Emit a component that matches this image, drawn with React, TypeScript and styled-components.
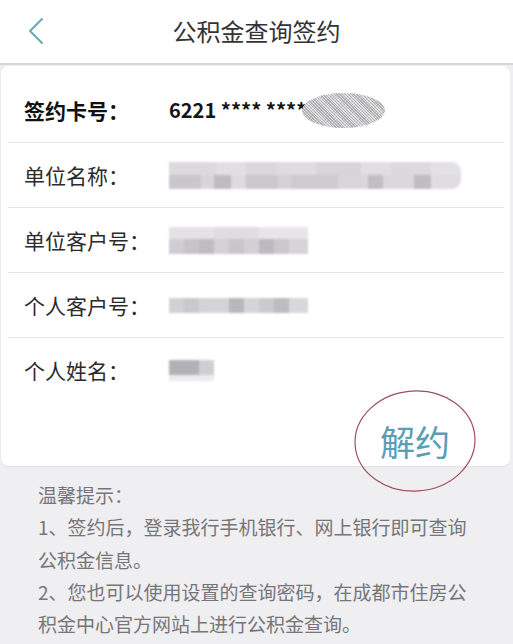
import React from "react";
import styled, { createGlobalStyle } from "styled-components";

const GlobalStyle = createGlobalStyle`
  html, body {
    margin: 0;
    padding: 0;
    background: #efeef1;
  }
  body {
    font-family: "Noto Sans CJK SC", "Noto Sans", sans-serif;
    -webkit-font-smoothing: antialiased;
  }
  * { box-sizing: border-box; }
`;

const Page = styled.div`
  width: 513px;
  min-height: 644px;
  background: #efeef1;
  display: flex;
  flex-direction: column;
  overflow: hidden;
`;

const Header = styled.header`
  height: 65px;
  background: #ffffff;
  border-bottom: 2px solid #d6d6d9;
  display: grid;
  grid-template-columns: 70px 1fr 70px;
  align-items: center;
`;

const BackButton = styled.button`
  border: none;
  background: none;
  height: 100%;
  padding: 0 0 2px 28px;
  display: flex;
  align-items: center;
  cursor: pointer;
`;

const Title = styled.h1`
  margin: 0 0 2px;
  text-align: center;
  font-size: 24px;
  font-weight: 400;
  color: #333333;
  letter-spacing: 0;
`;

const Card = styled.section`
  position: relative;
  background: #ffffff;
  margin: 1px 3px 0 1px;
  border-radius: 8px;
  padding-top: 12px;
  box-shadow: 0 1px 2px rgba(0, 0, 0, 0.05);
`;

const Row = styled.div<{ $last?: boolean }>`
  display: flex;
  align-items: center;
  height: 65px;
  margin: 0 6px 0 7px;
  padding-left: 16px;
  border-bottom: ${(p) => (p.$last ? "none" : "1px solid #e3e2e7")};
`;

const Label = styled.span<{ $strong?: boolean }>`
  width: 145px;
  flex: none;
  font-size: 21px;
  line-height: 1;
  font-weight: ${(p) => (p.$strong ? 700 : 400)};
  color: ${(p) => (p.$strong ? "#111111" : "#2b2b2b")};
`;

const Value = styled.span`
  display: flex;
  align-items: center;
`;

const CardNumber = styled.span`
  font-size: 20px;
  font-weight: 700;
  color: #151515;
  line-height: 1;
  white-space: pre;
`;

const BlurOval = styled.span`
  display: block;
  width: 83px;
  height: 35px;
  margin-left: -4px;
  border-radius: 50%;
  background: repeating-linear-gradient(
      45deg,
      rgba(150, 150, 152, 0.55) 0 1px,
      rgba(235, 235, 237, 0.55) 1px 2px
    ),
    repeating-linear-gradient(
      -45deg,
      rgba(160, 160, 162, 0.4) 0 1px,
      rgba(240, 240, 242, 0.4) 1px 3px
    ),
    #cdcdcf;
  filter: blur(0.4px);
`;

const MosaicBox = styled.span<{ $round: number }>`
  display: flex;
  flex-direction: column;
  overflow: hidden;
  border-radius: 0 ${(p) => p.$round}px ${(p) => p.$round}px 0;
  filter: blur(1px);
`;

const MosaicRow = styled.span<{ $h: number }>`
  display: flex;
  height: ${(p) => p.$h}px;
`;

const MosaicCell = styled.span<{ $w: number; $c: string }>`
  flex: none;
  width: ${(p) => p.$w}px;
  background: ${(p) => p.$c};
`;

type Cells = [number, string][];
type MosaicRowData = { h: number; cells: Cells };

function Mosaic({ rows, round = 0 }: { rows: MosaicRowData[]; round?: number }) {
  return (
    <MosaicBox $round={round}>
      {rows.map((r, i) => (
        <MosaicRow key={i} $h={r.h}>
          {r.cells.map(([w, c], j) => (
            <MosaicCell key={j} $w={w} $c={c} />
          ))}
        </MosaicRow>
      ))}
    </MosaicBox>
  );
}

const ActionArea = styled.div`
  height: 63px;
  display: flex;
  justify-content: flex-end;
  align-items: center;
  padding: 12px 60px 0 0;
`;

const UnbindButton = styled.button`
  position: relative;
  border: none;
  background: none;
  padding: 0;
  font-family: inherit;
  font-size: 35px;
  line-height: 1;
  color: #5a9db5;
  cursor: pointer;
`;

const Ring = styled.svg`
  position: absolute;
  left: 50%;
  top: 50%;
  width: 124px;
  height: 104px;
  transform: translate(-50%, -50%) rotate(-4deg);
  pointer-events: none;
  overflow: visible;
`;

const Tips = styled.div`
  padding: 13px 0 20px 38px;
  font-size: 19px;
  line-height: 32.3px;
  color: #767578;
`;

const TipLine = styled.p`
  margin: 0;
  width: 436px;
`;

const companyName: MosaicRowData[] = [
  {
    h: 13,
    cells: [
      [47, "#dcdadd"],
      [30, "#e1dfe3"],
      [30, "#d9d7db"],
      [40, "#dedce0"],
      [45, "#d7d5d9"],
      [30, "#e0dee2"],
      [40, "#dbd9dd"],
      [30, "#e3e1e5"],
    ],
  },
  {
    h: 14,
    cells: [
      [32, "#c9c7cb"],
      [13, "#d8d6da"],
      [17, "#bebcc0"],
      [15, "#dddbdf"],
      [32, "#cac8cc"],
      [13, "#d3d1d5"],
      [47, "#cdcbcf"],
      [30, "#d8d6da"],
      [15, "#c0bec2"],
      [31, "#dad8dc"],
      [17, "#bfbdc1"],
      [30, "#dfdde1"],
    ],
  },
];

const companyNo: MosaicRowData[] = [
  {
    h: 12,
    cells: [
      [45, "#e4e2e6"],
      [45, "#dfdde1"],
      [49, "#e7e5e9"],
    ],
  },
  {
    h: 15,
    cells: [
      [15, "#cfcdd1"],
      [15, "#c6c4c8"],
      [15, "#bfbdc1"],
      [15, "#d3d1d5"],
      [15, "#c8c6ca"],
      [15, "#d2d0d4"],
      [15, "#bcbac0"],
      [15, "#cac8cc"],
      [19, "#d6d4d8"],
    ],
  },
];

const personNo: MosaicRowData[] = [
  {
    h: 15,
    cells: [
      [15, "#d2d0d4"],
      [15, "#cac8cc"],
      [30, "#d5d3d7"],
      [15, "#b9b7bb"],
      [15, "#d6d4d8"],
      [15, "#cccace"],
      [15, "#bebcc0"],
      [19, "#d9d7db"],
    ],
  },
];

const personName: MosaicRowData[] = [
  {
    h: 15,
    cells: [
      [30, "#b3b1b5"],
      [15, "#d0ced2"],
    ],
  },
  {
    h: 6,
    cells: [[45, "#ecebee"]],
  },
];

export default function App() {
  return (
    <>
      <GlobalStyle />
      <Page>
        <Header>
          <BackButton aria-label="返回">
            <svg width="16" height="28" viewBox="0 0 16 28">
              <polyline
                points="14,2 2,14 14,26"
                fill="none"
                stroke="#6aa7b8"
                strokeWidth="2"
                strokeLinecap="round"
                strokeLinejoin="round"
              />
            </svg>
          </BackButton>
          <Title>公积金查询签约</Title>
          <span />
        </Header>

        <Card>
          <Row>
            <Label $strong>签约卡号：</Label>
            <Value>
              <CardNumber>6221 **** ****</CardNumber>
              <BlurOval />
            </Value>
          </Row>
          <Row>
            <Label>单位名称：</Label>
            <Value>
              <Mosaic rows={companyName} round={9} />
            </Value>
          </Row>
          <Row>
            <Label>单位客户号：</Label>
            <Value>
              <Mosaic rows={companyNo} />
            </Value>
          </Row>
          <Row>
            <Label>个人客户号：</Label>
            <Value>
              <Mosaic rows={personNo} />
            </Value>
          </Row>
          <Row $last>
            <Label>个人姓名：</Label>
            <Value>
              <Mosaic rows={personName} />
            </Value>
          </Row>
          <ActionArea>
            <UnbindButton>
              解约
              <Ring viewBox="0 0 124 104">
                <ellipse
                  cx="62"
                  cy="52"
                  rx="60"
                  ry="50"
                  fill="none"
                  stroke="#9c4f5a"
                  strokeWidth="1.2"
                />
              </Ring>
            </UnbindButton>
          </ActionArea>
        </Card>

        <Tips>
          <TipLine>温馨提示：</TipLine>
          <TipLine>1、签约后，登录我行手机银行、网上银行即可查询公积金信息。</TipLine>
          <TipLine>2、您也可以使用设置的查询密码，在成都市住房公积金中心官方网站上进行公积金查询。</TipLine>
        </Tips>
      </Page>
    </>
  );
}
